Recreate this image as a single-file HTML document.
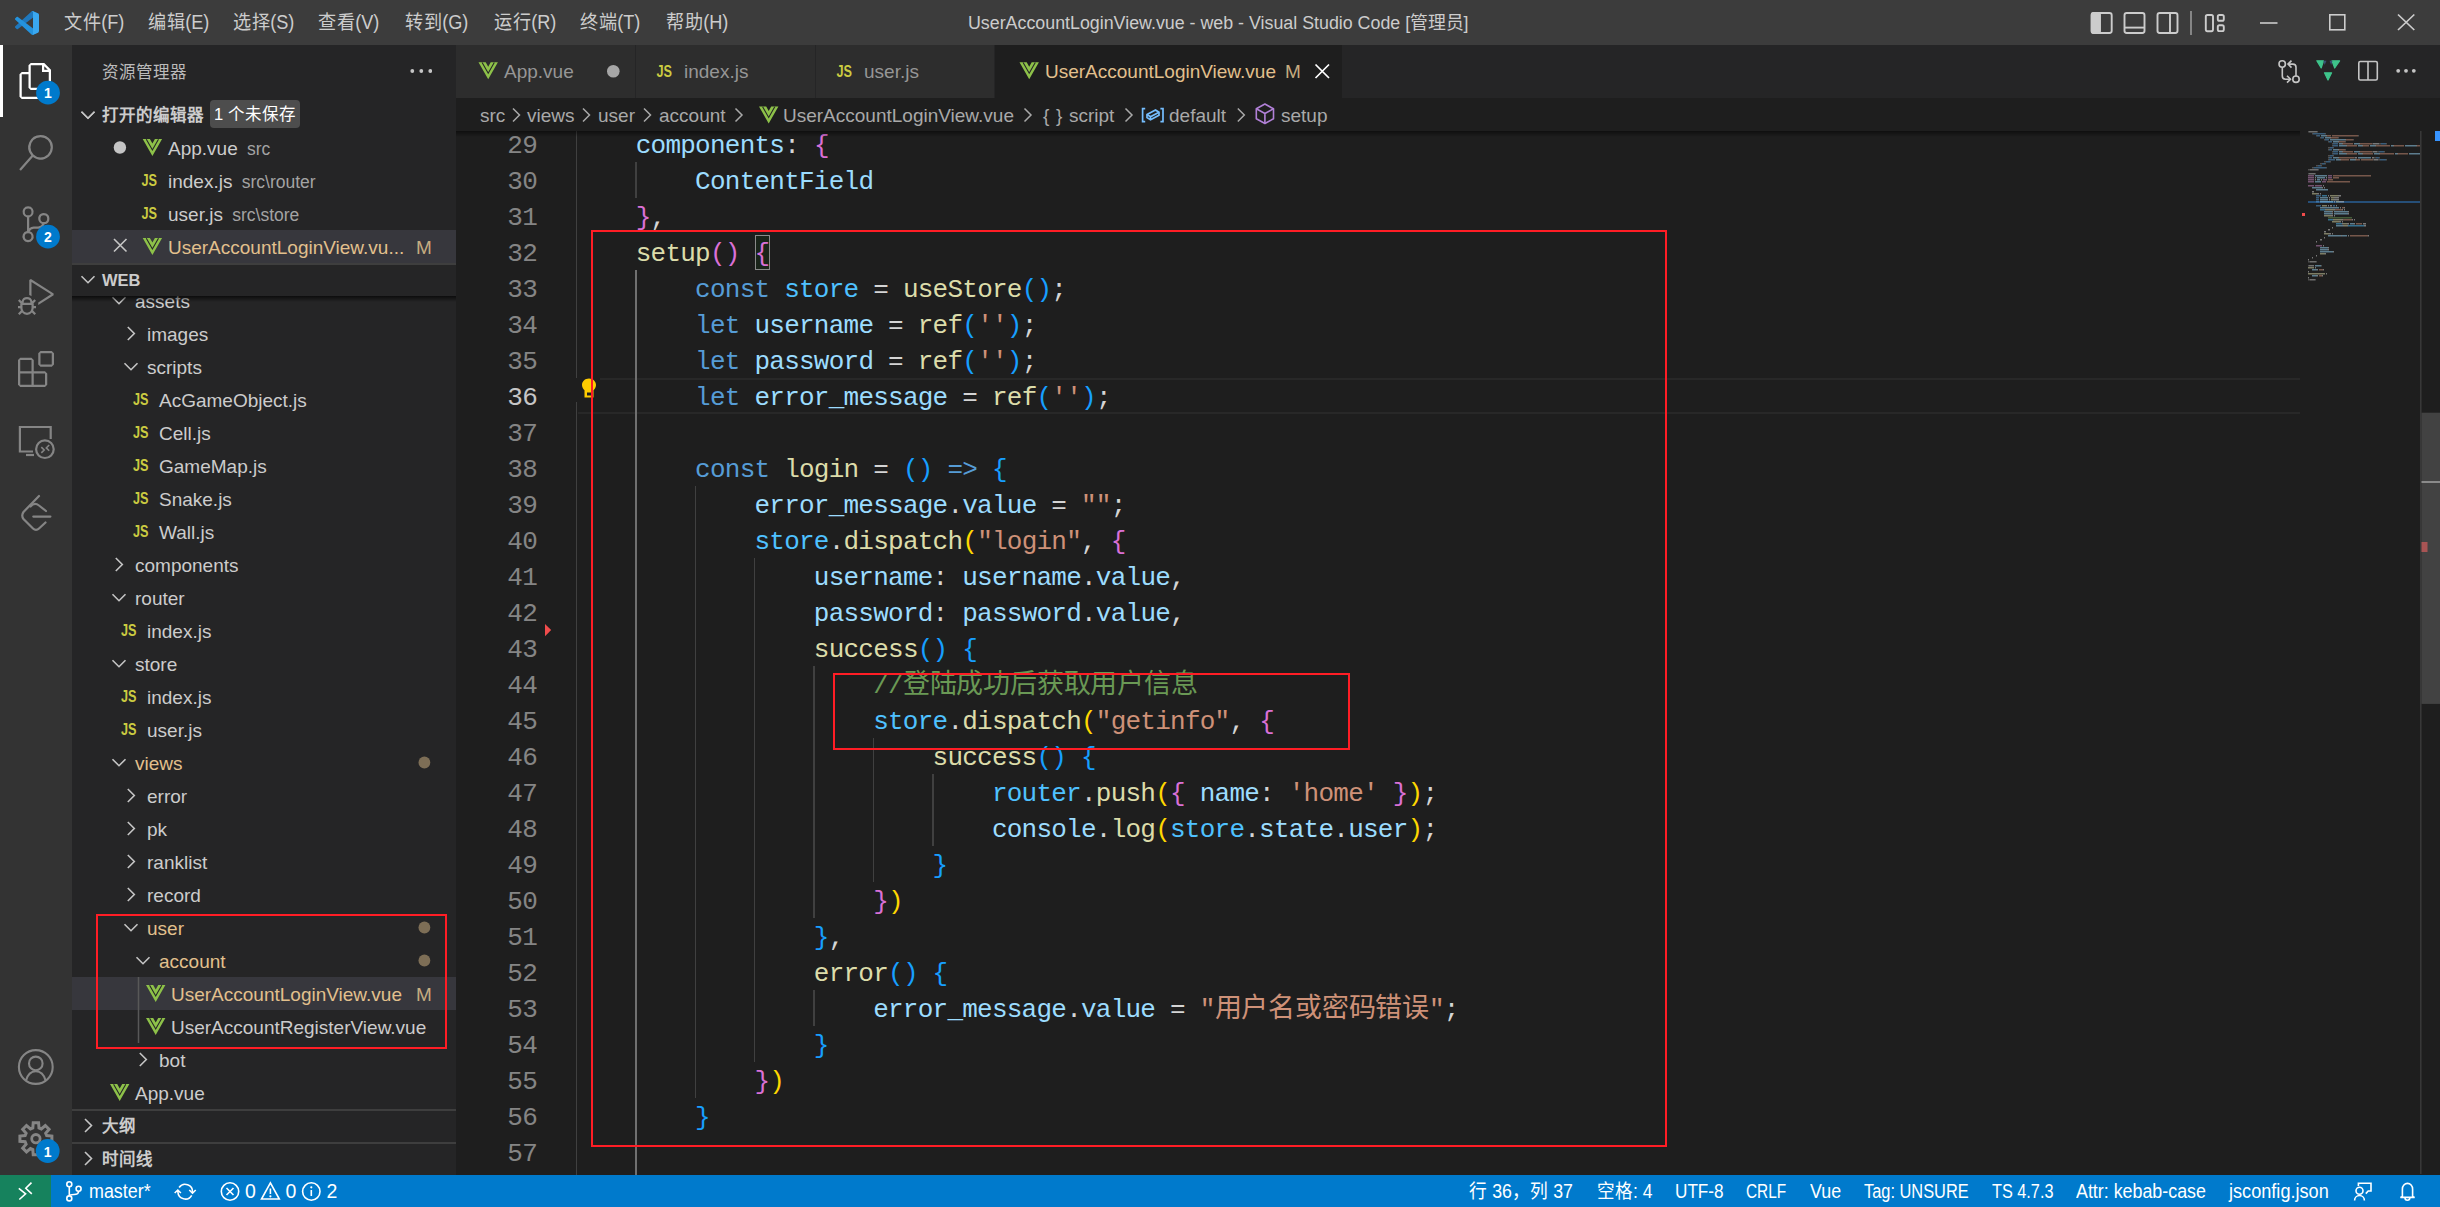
<!DOCTYPE html>
<html lang="zh-CN">
<head>
<meta charset="utf-8">
<style>
*{margin:0;padding:0;box-sizing:border-box}
html,body{width:2440px;height:1207px;overflow:hidden;background:#1e1e1e;font-family:"Liberation Sans",sans-serif;color:#cccccc}
.a{position:absolute}
#title{left:0;top:0;width:2440px;height:45px;background:#3c3c3c}
.menu{top:0;height:45px;line-height:45px;font-size:19.5px;color:#cccccc;white-space:nowrap;transform:scaleX(0.93);transform-origin:0 0}
#act{left:0;top:45px;width:72px;height:1130px;background:#333333}
#side{left:72px;top:45px;width:384px;height:1130px;background:#252526;overflow:hidden}
#tabs{left:456px;top:45px;width:1984px;height:53px;background:#252526}
.tab{top:0;height:53px;background:#2d2d2d;border-right:1px solid #252526}
#crumbs{left:456px;top:98px;width:1984px;height:33px;background:#1e1e1e}
#editor{left:456px;top:131px;width:1984px;height:1044px;background:#1e1e1e;overflow:hidden}
#status{left:0;top:1175px;width:2440px;height:32px;background:#007acc}
.st{top:0;height:32px;line-height:32px;font-size:19.5px;color:#ffffff;white-space:nowrap}
.row{position:absolute;left:0;width:384px;height:33px;line-height:35px;font-size:19px;color:#cccccc;white-space:nowrap}
.code{position:absolute;left:121px;height:36px;line-height:36px;font-family:"Liberation Mono",monospace;font-size:26px;letter-spacing:-0.76px;white-space:pre;color:#d4d4d4}
.cjk{font-size:27px;letter-spacing:-0.2px}
.ln{position:absolute;left:0;width:81px;text-align:right;height:36px;line-height:36px;font-family:"Liberation Mono",monospace;font-size:26px;letter-spacing:-0.76px;color:#858585}
.crumb{top:0;height:33px;line-height:35px;font-size:19px;color:#a9a9a9;white-space:nowrap}
.box{position:absolute;border:2px solid #ff1d25}
</style>
</head>
<body>
<div id="title" class="a">
<svg class="a" style="left:15px;top:10.8px" width="24" height="24" viewBox="0 0 100 100"><path fill="#1f78bd" d="M96.4614 10.7962L75.8569 0.875542C73.4719 -0.272773 70.6217 0.211611 68.75 2.08333L1.29858 63.5832C-0.515693 65.2373 -0.513607 68.0937 1.30308 69.7452L6.81272 74.754C8.29793 76.1042 10.5347 76.2036 12.1338 74.9905L93.3609 13.3699C96.0859 11.3026 100 13.2462 100 16.6667V16.4275C100 14.0265 98.6246 11.8378 96.4614 10.7962Z"/><path fill="#2493de" d="M96.4614 89.2038L75.8569 99.1245C73.4719 100.273 70.6217 99.7884 68.75 97.9167L1.29858 36.4169C-0.515693 34.7627 -0.513607 31.9063 1.30308 30.2548L6.81272 25.246C8.29793 23.8958 10.5347 23.7964 12.1338 25.0095L93.3609 86.6301C96.0859 88.6974 100 86.7538 100 83.3334V83.5726C100 85.9735 98.6246 88.1622 96.4614 89.2038Z"/><path fill="#3aa8f0" d="M75.8578 99.1263C73.4721 100.274 70.6219 99.7885 68.75 97.9166C71.0564 100.223 75 98.5895 75 95.3278V4.67213C75 1.41039 71.0564 -0.223106 68.75 2.08329C70.6219 0.211402 73.4721 -0.273666 75.8578 0.873633L96.4587 10.7807C98.6234 11.8217 100 14.0112 100 16.4132V83.5871C100 85.9891 98.6234 88.1786 96.4586 89.2196L75.8578 99.1263Z"/></svg>
<div class="a menu" style="left:64px">文件(F)</div>
<div class="a menu" style="left:148px">编辑(E)</div>
<div class="a menu" style="left:233px">选择(S)</div>
<div class="a menu" style="left:318px">查看(V)</div>
<div class="a menu" style="left:405px">转到(G)</div>
<div class="a menu" style="left:494px">运行(R)</div>
<div class="a menu" style="left:580px">终端(T)</div>
<div class="a menu" style="left:666px">帮助(H)</div>
<div class="a menu" id="wtitle" style="left:968px;top:1px;font-size:18px;transform:scaleX(0.99)">UserAccountLoginView.vue - web - Visual Studio Code [管理员]</div>
<svg class="a" style="left:2080px;top:0" width="360" height="45" viewBox="2080 0 360 45" fill="none" stroke="#cccccc" stroke-width="1.9">
<rect x="2091.7" y="13" width="20" height="20" rx="2.2"/><rect x="2091.7" y="13" width="8.3" height="20" rx="1.8" fill="#cccccc"/>
<rect x="2124.5" y="13" width="20" height="20" rx="2.2"/><line x1="2124.5" y1="27.6" x2="2144.5" y2="27.6"/>
<rect x="2157.5" y="13" width="20" height="20" rx="2.2"/><line x1="2170" y1="13" x2="2170" y2="33"/>
<line x1="2191" y1="11" x2="2191" y2="35" stroke="#999999" stroke-width="1.6"/>
<rect x="2205.8" y="15" width="7.2" height="16.2" rx="1.6"/><rect x="2217.8" y="15" width="6" height="5.8" rx="1.6"/><rect x="2217.8" y="25.3" width="6" height="5.8" rx="1.6"/>
<line x1="2260" y1="23" x2="2277.5" y2="23" stroke-width="1.6"/>
<rect x="2329.8" y="14.8" width="15" height="15" stroke-width="1.6"/>
<path d="M2398 14.5L2414.3 30M2414.3 14.5L2398 30" stroke-width="1.7"/>
</svg>
</div>
<div id="act" class="a">
<svg class="a" style="left:0;top:0" width="72" height="1129" viewBox="0 45 72 1129">
<rect x="0" y="45" width="3" height="72" fill="#ffffff"/>
<g transform="translate(18 63) scale(1.5)" fill="#ffffff"><path d="M17.5 0h-9L7 1.5V6H2.5L1 7.5v15.07L2.5 24h12.07L16 22.57V18h4.7l1.3-1.43V4.5L17.5 0zm0 2.12l2.38 2.38H17.5V2.12zm-3 20.38h-12v-15H7v9.07L8.5 18h6v4.5zm6-6h-12v-15H16V6h4.5v10.5z"/></g>
<g transform="translate(17.7 134.9) scale(1.5)" fill="#858585"><path d="M15.25 0a8.25 8.25 0 0 0-6.18 13.72L1 22.88l1.12 1 8.05-9.12A8.251 8.251 0 1 0 15.25.01V0zm0 15a6.75 6.75 0 1 1 0-13.5 6.75 6.75 0 0 1 0 13.5z"/></g>
<g transform="translate(17.9 206.3) scale(1.5)" fill="#858585"><path d="M21.007 8.222A3.738 3.738 0 0 0 15.045 5.2a3.737 3.737 0 0 0 1.156 6.583 2.988 2.988 0 0 1-2.668 1.67h-2.99a4.456 4.456 0 0 0-2.989 1.165V7.4a3.737 3.737 0 1 0-1.494 0v9.117a3.776 3.776 0 1 0 1.816.099 2.99 2.99 0 0 1 2.668-1.667h2.99a4.484 4.484 0 0 0 4.223-3.039 3.736 3.736 0 0 0 3.25-3.687zM4.565 3.738a2.242 2.242 0 1 1 4.484 0 2.242 2.242 0 0 1-4.484 0zm4.484 16.441a2.242 2.242 0 1 1-4.484 0 2.242 2.242 0 0 1 4.484 0zm8.221-9.715a2.242 2.242 0 1 1 0-4.485 2.242 2.242 0 0 1 0 4.485z"/></g>
<g transform="translate(18 279) scale(1.5)" fill="#858585"><path d="M10.94 13.5l-1.32 1.32a3.73 3.73 0 0 0-7.24 0L1.06 13.5 0 14.56l1.72 1.72-.22.22V18H0v1.5h1.5v.08c.077.489.214.966.41 1.42L0 22.94 1.06 24l1.65-1.650A4.308 4.308 0 0 0 6 24a4.310 4.310 0 0 0 3.29-1.65L10.94 24 12 22.94 10.09 21c.198-.464.336-.951.41-1.45v-.1H12V18h-1.5v-1.5l-.22-.22L12 14.56l-1.06-1.06zM6 13.5a2.25 2.25 0 0 1 2.25 2.25h-4.5A2.25 2.25 0 0 1 6 13.5zm3 6a3.330 3.330 0 0 1-3 3 3.330 3.330 0 0 1-3-3v-2.25h6v2.25zm14.76-9.9v1.26L13.5 17.37V15.6l8.5-5.37L9 2v9.46a5.070 5.070 0 0 0-1.5-.72V.63L8.64 0l15.12 9.6z"/></g>
<g transform="translate(18 351) scale(1.5)" fill="#858585"><path d="M13.5 1.5L15 0h7.5L24 1.5V9l-1.5 1.5H15L13.5 9V1.5zm1.5 0V9h7.5V1.5H15zM0 15V6l1.5-1.5H9L10.5 6v7.5H18l1.5 1.5v7.5L18 24H1.5L0 22.5V15zm9-1.5V6H1.5v7.5H9zM9 15H1.5v7.5H9V15zm1.5 7.5H18V15h-7.5v7.5z"/></g>
<g fill="none" stroke="#858585" stroke-width="2.2">
<path d="M33 451.5H19.9V427H50.7V439"/><path d="M26 455H34"/>
<circle cx="44.9" cy="449.2" r="8.8"/>
<path d="M41.3 447.2L44.2 450L41.3 452.8M49.2 445L46.3 447.9L49.2 450.8" stroke-width="1.6"/>
<path d="M39 496L23.5 512Q21 515.5 23.5 519L33 528.5Q36 531.5 39 528.5L45.5 522.5" stroke-linecap="round"/>
<path d="M30.5 506.5Q34.5 502 39 505.5L46 511" stroke-linecap="round"/>
<path d="M33.3 516.6H50.4" stroke-linecap="round"/>
<circle cx="35.8" cy="1067" r="16.9" stroke-width="2.1"/>
<circle cx="35.8" cy="1063.4" r="6.8" stroke-width="2.1"/>
<path d="M26 1080.5Q28.5 1071.2 35.8 1071.2Q43.1 1071.2 45.6 1080.5" stroke-width="2.1"/>
</g>
<g transform="translate(35.9 1138.7)" fill="none" stroke="#858585" stroke-width="3" stroke-linejoin="miter">
<path d="M-3.09 -10.77L-2.67 -15.98L2.67 -15.98L3.09 -10.77L5.43 -9.80L9.41 -13.19L13.19 -9.41L9.80 -5.43L10.77 -3.09L15.98 -2.67L15.98 2.67L10.77 3.09L9.80 5.43L13.19 9.41L9.41 13.19L5.43 9.80L3.09 10.77L2.67 15.98L-2.67 15.98L-3.09 10.77L-5.43 9.80L-9.41 13.19L-13.19 9.41L-9.80 5.43L-10.77 3.09L-15.98 2.67L-15.98 -2.67L-10.77 -3.09L-9.80 -5.43L-13.19 -9.41L-9.41 -13.19L-5.43 -9.80Z"/>
<circle cx="0" cy="0" r="4.2" stroke-width="2.8"/>
</g>
<g font-family="Liberation Sans" font-weight="bold" font-size="14" fill="#fff" text-anchor="middle">
<circle cx="48" cy="92.7" r="11.9" fill="#007acc"/><text x="48" y="98.3">1</text>
<circle cx="48" cy="236.7" r="11.9" fill="#007acc"/><text x="48" y="242.3">2</text>
<circle cx="47.7" cy="1151" r="11.9" fill="#007acc"/><text x="47.7" y="1156.6">1</text>
</g>
</svg>
</div>
<div id="side" class="a">
<svg width="0" height="0" style="position:absolute"><defs>
<g id="vue"><path fill="#8dc149" d="M0 0H7.2L9.7 4.4L12.2 0H19.4L9.7 17Z"/><path fill="none" stroke="#252526" stroke-width="1.1" d="M3.6 0.3L9.7 10.9L15.8 0.3"/></g>
</defs></svg>
<div class="a" style="left:30px;top:14px;font-size:16.5px;line-height:26px;color:#bbbbbb">资源管理器</div>
<svg class="a" style="left:330px;top:19px" width="30" height="14"><g fill="#c5c5c5"><circle cx="10.3" cy="7" r="1.9"/><circle cx="19.3" cy="7" r="1.9"/><circle cx="28.3" cy="7" r="1.9"/></g></svg>
<svg class="a" style="left:0;top:53px" width="384" height="198">
<g fill="none" stroke="#c5c5c5" stroke-width="1.6">
<path d="M9.5 13.7L16 20.2L22.5 13.7"/>
<path d="M9.5 211.7L16 218.2L22.5 211.7" transform="translate(0 -198)"/>
</g>
</svg>
<div class="a" style="left:30px;top:53px;height:33px;line-height:35px;font-size:16.5px;font-weight:bold;color:#cccccc">打开的编辑器</div>
<div class="a" style="left:138px;top:55px;width:90px;height:28px;border-radius:4px;background:#4d4d4d;color:#ffffff;font-size:16.5px;line-height:28px;text-align:center">1 个未保存</div>
<div class="a" style="left:0;top:185px;width:384px;height:33px;background:#37373d"></div>
<svg class="a" style="left:0;top:86px" width="384" height="132">
<circle cx="47.9" cy="16.5" r="6.2" fill="#c5c5c5"/>
<path d="M42 108L54.5 120.5M54.5 108L42 120.5" stroke="#c5c5c5" stroke-width="1.6" fill="none"/>
<use href="#vue" x="70.7" y="8"/>
<use href="#vue" x="70.7" y="107"/>
<g font-family="Liberation Sans" font-weight="bold" font-size="16" fill="#cbcb41"><text x="69.5" y="55.3" textLength="15.5" lengthAdjust="spacingAndGlyphs">JS</text><text x="69.5" y="88.3" textLength="15.5" lengthAdjust="spacingAndGlyphs">JS</text></g>
</svg>
<div class="row" style="top:86px;left:96px">App.vue <span style="font-size:17.5px;color:#a3a3a3;margin-left:4px">src</span></div>
<div class="row" style="top:119px;left:96px">index.js <span style="font-size:17.5px;color:#a3a3a3;margin-left:4px">src\router</span></div>
<div class="row" style="top:152px;left:96px">user.js <span style="font-size:17.5px;color:#a3a3a3;margin-left:4px">src\store</span></div>
<div class="row" style="top:185px;left:96px;color:#e2c08d">UserAccountLoginView.vu...</div>
<div class="row" style="top:185px;left:344px;color:#c5ab80;width:20px">M</div>
<div class="a" style="left:0;top:218px;width:384px;height:33px;border-top:2px solid #3e3e3e"></div>
<svg class="a" style="left:0;top:218px" width="384" height="33"><path d="M9.5 13.2L16 19.7L22.5 13.2" fill="none" stroke="#c5c5c5" stroke-width="1.6"/></svg>
<div class="a" style="left:30px;top:218px;height:33px;line-height:35px;font-size:16.5px;font-weight:bold;color:#cccccc">WEB</div>
<div class="a" style="left:0;top:251px;width:384px;height:813px;overflow:hidden">
<div class="a" style="left:0;top:681px;width:384px;height:33px;background:#37373d"></div>
<svg class="a" style="left:0;top:0" width="384" height="813">
<line x1="66.5" y1="681" x2="66.5" y2="747" stroke="#585858" stroke-width="1.5"/>
<g fill="none" stroke="#c5c5c5" stroke-width="1.6">
<path d="M40.5 1.2L47.0 7.7L53.5 1.2"/>
<path d="M55.8 31.0L62.3 37.5L55.8 44.0"/>
<path d="M52.5 67.2L59.0 73.7L65.5 67.2"/>
<path d="M43.8 262.0L50.3 268.5L43.8 275.0"/>
<path d="M40.5 298.2L47.0 304.7L53.5 298.2"/>
<path d="M40.5 364.2L47.0 370.7L53.5 364.2"/>
<path d="M40.5 463.2L47.0 469.7L53.5 463.2"/>
<path d="M55.8 493.0L62.3 499.5L55.8 506.0"/>
<path d="M55.8 526.0L62.3 532.5L55.8 539.0"/>
<path d="M55.8 559.0L62.3 565.5L55.8 572.0"/>
<path d="M55.8 592.0L62.3 598.5L55.8 605.0"/>
<path d="M52.5 628.2L59.0 634.7L65.5 628.2"/>
<path d="M64.5 661.2L71.0 667.7L77.5 661.2"/>
<path d="M67.8 757.0L74.3 763.5L67.8 770.0"/>
</g>
<g font-family="Liberation Sans" font-weight="bold" font-size="16" fill="#cbcb41">
<text x="61" y="109.3" textLength="15.5" lengthAdjust="spacingAndGlyphs">JS</text>
<text x="61" y="142.3" textLength="15.5" lengthAdjust="spacingAndGlyphs">JS</text>
<text x="61" y="175.3" textLength="15.5" lengthAdjust="spacingAndGlyphs">JS</text>
<text x="61" y="208.3" textLength="15.5" lengthAdjust="spacingAndGlyphs">JS</text>
<text x="61" y="241.3" textLength="15.5" lengthAdjust="spacingAndGlyphs">JS</text>
<text x="49" y="340.3" textLength="15.5" lengthAdjust="spacingAndGlyphs">JS</text>
<text x="49" y="406.3" textLength="15.5" lengthAdjust="spacingAndGlyphs">JS</text>
<text x="49" y="439.3" textLength="15.5" lengthAdjust="spacingAndGlyphs">JS</text>
<use href="#vue" x="74" y="689.0"/>
<use href="#vue" x="74" y="722.0"/>
<use href="#vue" x="38" y="788.0"/>
</g>
<g fill="#7d6e56">
<circle cx="352.4" cy="466.5" r="5.9"/>
<circle cx="352.4" cy="631.5" r="5.9"/>
<circle cx="352.4" cy="664.5" r="5.9"/>
</g>
</svg>
<div class="row" style="top:-12px;left:63px;color:#cccccc">assets</div>
<div class="row" style="top:21px;left:75px;color:#cccccc">images</div>
<div class="row" style="top:54px;left:75px;color:#cccccc">scripts</div>
<div class="row" style="top:87px;left:87px;color:#cccccc">AcGameObject.js</div>
<div class="row" style="top:120px;left:87px;color:#cccccc">Cell.js</div>
<div class="row" style="top:153px;left:87px;color:#cccccc">GameMap.js</div>
<div class="row" style="top:186px;left:87px;color:#cccccc">Snake.js</div>
<div class="row" style="top:219px;left:87px;color:#cccccc">Wall.js</div>
<div class="row" style="top:252px;left:63px;color:#cccccc">components</div>
<div class="row" style="top:285px;left:63px;color:#cccccc">router</div>
<div class="row" style="top:318px;left:75px;color:#cccccc">index.js</div>
<div class="row" style="top:351px;left:63px;color:#cccccc">store</div>
<div class="row" style="top:384px;left:75px;color:#cccccc">index.js</div>
<div class="row" style="top:417px;left:75px;color:#cccccc">user.js</div>
<div class="row" style="top:450px;left:63px;color:#e2c08d">views</div>
<div class="row" style="top:483px;left:75px;color:#cccccc">error</div>
<div class="row" style="top:516px;left:75px;color:#cccccc">pk</div>
<div class="row" style="top:549px;left:75px;color:#cccccc">ranklist</div>
<div class="row" style="top:582px;left:75px;color:#cccccc">record</div>
<div class="row" style="top:615px;left:75px;color:#e2c08d">user</div>
<div class="row" style="top:648px;left:87px;color:#e2c08d">account</div>
<div class="row" style="top:681px;left:99px;color:#e2c08d">UserAccountLoginView.vue</div>
<div class="row" style="top:714px;left:99px;color:#cccccc">UserAccountRegisterView.vue</div>
<div class="row" style="top:747px;left:87px;color:#cccccc">bot</div>
<div class="row" style="top:780px;left:63px;color:#cccccc">App.vue</div>
<div class="row" style="top:681px;left:344px;color:#c5ab80;width:20px">M</div>
</div>
<div class="a" style="left:0;top:251px;width:384px;height:6px;background:linear-gradient(#000000aa,#00000000)"></div>
<div class="a" style="left:0;top:1064px;width:384px;height:33px;border-top:2px solid #3e3e3e"></div>
<svg class="a" style="left:0;top:1064px" width="384" height="66"><g fill="none" stroke="#c5c5c5" stroke-width="1.6"><path d="M13 10L19.5 16.5L13 23"/><path d="M13 43L19.5 49.5L13 56"/></g></svg>
<div class="a" style="left:30px;top:1064px;height:33px;line-height:35px;font-size:16.5px;font-weight:bold;color:#cccccc">大纲</div>
<div class="a" style="left:0;top:1097px;width:384px;height:33px;border-top:2px solid #3e3e3e"></div>
<div class="a" style="left:30px;top:1097px;height:33px;line-height:35px;font-size:16.5px;font-weight:bold;color:#cccccc">时间线</div>
</div>
<div id="tabs" class="a">
<div class="a tab" style="left:0;width:180px"></div>
<div class="a tab" style="left:180px;width:180px"></div>
<div class="a tab" style="left:360px;width:179px"></div>
<div class="a" style="left:539px;top:0;width:347px;height:53px;background:#1e1e1e"></div>
<svg class="a" style="left:0;top:0" width="1984" height="53">
<use href="#vue" x="22.5" y="17.3"/>
<use href="#vue" x="563.5" y="17.3"/>
<g font-family="Liberation Sans" font-weight="bold" font-size="16" fill="#cbcb41"><text x="200.5" y="31.5" textLength="15.5" lengthAdjust="spacingAndGlyphs">JS</text><text x="380.5" y="31.5" textLength="15.5" lengthAdjust="spacingAndGlyphs">JS</text></g>
<circle cx="157.3" cy="26.2" r="6.3" fill="#a6a6a6"/>
<path d="M859.5 19.5L873 33M873 19.5L859.5 33" stroke="#ffffff" stroke-width="1.7" fill="none"/>
</svg>
<div class="a" style="left:48px;top:0;height:53px;line-height:54.5px;font-size:19px;color:#969696">App.vue</div>
<div class="a" style="left:228px;top:0;height:53px;line-height:54.5px;font-size:19px;color:#969696">index.js</div>
<div class="a" style="left:408px;top:0;height:53px;line-height:54.5px;font-size:19px;color:#969696">user.js</div>
<div class="a" style="left:589px;top:0;height:53px;line-height:54.5px;font-size:19px;color:#e2c08d">UserAccountLoginView.vue</div>
<div class="a" style="left:829px;top:0;height:53px;line-height:54.5px;font-size:19px;color:#c5ab80">M</div>
<svg class="a" style="left:1810px;top:0" width="174" height="53" viewBox="2266 45 174 53">
<g fill="none" stroke="#c5c5c5" stroke-width="1.6">
<circle cx="2282.2" cy="64" r="3.2"/><circle cx="2296" cy="79.2" r="3.2"/><path d="M2282.3 67.2V76Q2282.3 79.2 2285.5 79.2H2290.3"/><path d="M2287 75.8L2290.5 79.2L2287 82.6"/><path d="M2296 76V67.3Q2296 64.1 2292.8 64.1H2288.2"/><path d="M2291.5 60.6L2288 64.1L2291.5 67.6"/><rect x="2358.8" y="61.5" width="18.5" height="18.5" rx="1.5"/><path d="M2368 61.5V80"/>
</g>
<g fill="#3ec48b" stroke="#3ec48b" stroke-width="1.2" stroke-linejoin="round"><path d="M2316.8 60.8L2323.5 60.8L2321.2 68Z"/><path d="M2332 60.8L2339.6 60.8L2334.7 68Z"/><path d="M2324.5 72.8L2331.6 72.8L2328 80Z"/></g><g fill="#3a4f72"><path d="M2323.3 60.8L2326.5 60.8L2324.6 65Z"/><path d="M2329.5 60.8L2332.5 60.8L2331.2 65Z"/></g>
<g fill="#c5c5c5"><circle cx="2398.2" cy="70.8" r="1.9"/><circle cx="2406" cy="70.8" r="1.9"/><circle cx="2413.8" cy="70.8" r="1.9"/></g>
</svg>
</div>
<div id="crumbs" class="a">
<svg class="a" style="left:0;top:0" width="1984" height="33" viewBox="456 98 1984 33">
<g fill="none" stroke="#a9a9a9" stroke-width="1.5">
<path d="M513 108.5L519.5 115L513 121.5"/><path d="M583 108.5L589.5 115L583 121.5"/><path d="M644 108.5L650.5 115L644 121.5"/>
<path d="M735.5 108.5L742 115L735.5 121.5"/><path d="M1024.5 108.5L1031 115L1024.5 121.5"/><path d="M1125.5 108.5L1132 115L1125.5 121.5"/><path d="M1237.8 108.5L1244.3 115L1237.8 121.5"/>
</g>
<use href="#vue" x="759" y="106.5"/>
<g fill="none" stroke="#75beff" stroke-width="1.7"><path d="M1145.2 108.6H1142.6V121.6H1145.2M1160.4 108.6H1163V121.6H1160.4"/><path d="M1147 114.5L1155.5 110L1159 112.3V115.2L1150.5 119.7L1147 117.5Z"/><path d="M1147 114.5L1150.5 116.7L1159 112.3M1150.5 116.7V119.7"/></g>
<g fill="none" stroke="#b180d7" stroke-width="1.6" stroke-linejoin="round"><path d="M1264.9 104L1273.5 108.8V118.8L1264.9 123.5L1256.3 118.8V108.8Z"/><path d="M1256.3 108.8L1264.9 113.5L1273.5 108.8M1264.9 113.5V123.5"/></g>
</svg>
<div class="a crumb" style="left:24px">src</div>
<div class="a crumb" style="left:71px">views</div>
<div class="a crumb" style="left:142px">user</div>
<div class="a crumb" style="left:203px">account</div>
<div class="a crumb" style="left:327px">UserAccountLoginView.vue</div>
<div class="a crumb" style="left:587px">{</div><div class="a crumb" style="left:600px">}</div><div class="a crumb" style="left:613px">script</div>
<div class="a crumb" style="left:713px">default</div>
<div class="a crumb" style="left:825px">setup</div>
</div>
<div id="editor" class="a">
<div class="a" style="left:144px;top:247px;width:1700px;height:2.2px;background:#282828"></div>
<div class="a" style="left:122px;top:280.5px;width:1722px;height:2.5px;background:#282828"></div>
<div class="a" style="left:119.80px;top:-5px;width:1.6px;height:1080px;background:#404040"></div>
<div class="a" style="left:179.16px;top:31px;width:1.6px;height:36px;background:#404040"></div>
<div class="a" style="left:179.16px;top:139px;width:1.6px;height:936px;background:#707070"></div>
<div class="a" style="left:238.52px;top:355px;width:1.6px;height:612px;background:#404040"></div>
<div class="a" style="left:297.88px;top:427px;width:1.6px;height:504px;background:#404040"></div>
<div class="a" style="left:357.24px;top:535px;width:1.6px;height:252px;background:#404040"></div>
<div class="a" style="left:357.24px;top:859px;width:1.6px;height:36px;background:#404040"></div>
<div class="a" style="left:416.60px;top:607px;width:1.6px;height:144px;background:#404040"></div>
<div class="a" style="left:475.96px;top:643px;width:1.6px;height:72px;background:#404040"></div>
<div class="a" style="left:119px;top:247px;width:4px;height:24px;background:#1e1e1e"></div>
<div class="a" style="left:298.58px;top:103.5px;width:15.5px;height:35px;border:1.5px solid #8a8a8a;background:rgba(0,100,0,0.1)"></div>
<div class="ln" style="top:-3px;color:#858585">29</div>
<div class="ln" style="top:33px;color:#858585">30</div>
<div class="ln" style="top:69px;color:#858585">31</div>
<div class="ln" style="top:105px;color:#858585">32</div>
<div class="ln" style="top:141px;color:#858585">33</div>
<div class="ln" style="top:177px;color:#858585">34</div>
<div class="ln" style="top:213px;color:#858585">35</div>
<div class="ln" style="top:249px;color:#c6c6c6">36</div>
<div class="ln" style="top:285px;color:#858585">37</div>
<div class="ln" style="top:321px;color:#858585">38</div>
<div class="ln" style="top:357px;color:#858585">39</div>
<div class="ln" style="top:393px;color:#858585">40</div>
<div class="ln" style="top:429px;color:#858585">41</div>
<div class="ln" style="top:465px;color:#858585">42</div>
<div class="ln" style="top:501px;color:#858585">43</div>
<div class="ln" style="top:537px;color:#858585">44</div>
<div class="ln" style="top:573px;color:#858585">45</div>
<div class="ln" style="top:609px;color:#858585">46</div>
<div class="ln" style="top:645px;color:#858585">47</div>
<div class="ln" style="top:681px;color:#858585">48</div>
<div class="ln" style="top:717px;color:#858585">49</div>
<div class="ln" style="top:753px;color:#858585">50</div>
<div class="ln" style="top:789px;color:#858585">51</div>
<div class="ln" style="top:825px;color:#858585">52</div>
<div class="ln" style="top:861px;color:#858585">53</div>
<div class="ln" style="top:897px;color:#858585">54</div>
<div class="ln" style="top:933px;color:#858585">55</div>
<div class="ln" style="top:969px;color:#858585">56</div>
<div class="ln" style="top:1005px;color:#858585">57</div>
<div class="ln" style="top:1041px;color:#858585">58</div>
<div class="code" style="top:-3px;left:179.76px"><span style="color:#9cdcfe">components</span><span style="color:#d4d4d4">:</span> <span style="color:#da70d6">{</span></div>
<div class="code" style="top:33px;left:239.12px"><span style="color:#9cdcfe">ContentField</span></div>
<div class="code" style="top:69px;left:179.76px"><span style="color:#da70d6">}</span><span style="color:#d4d4d4">,</span></div>
<div class="code" style="top:105px;left:179.76px"><span style="color:#dcdcaa">setup</span><span style="color:#da70d6">()</span> <span style="color:#da70d6">{</span></div>
<div class="code" style="top:141px;left:239.12px"><span style="color:#569cd6">const</span> <span style="color:#4fc1ff">store</span><span style="color:#d4d4d4"> = </span><span style="color:#dcdcaa">useStore</span><span style="color:#179fff">()</span><span style="color:#d4d4d4">;</span></div>
<div class="code" style="top:177px;left:239.12px"><span style="color:#569cd6">let</span> <span style="color:#9cdcfe">username</span><span style="color:#d4d4d4"> = </span><span style="color:#dcdcaa">ref</span><span style="color:#179fff">(</span><span style="color:#ce9178">&#x27;&#x27;</span><span style="color:#179fff">)</span><span style="color:#d4d4d4">;</span></div>
<div class="code" style="top:213px;left:239.12px"><span style="color:#569cd6">let</span> <span style="color:#9cdcfe">password</span><span style="color:#d4d4d4"> = </span><span style="color:#dcdcaa">ref</span><span style="color:#179fff">(</span><span style="color:#ce9178">&#x27;&#x27;</span><span style="color:#179fff">)</span><span style="color:#d4d4d4">;</span></div>
<div class="code" style="top:249px;left:239.12px"><span style="color:#569cd6">let</span> <span style="color:#9cdcfe">error_message</span><span style="color:#d4d4d4"> = </span><span style="color:#dcdcaa">ref</span><span style="color:#179fff">(</span><span style="color:#ce9178">&#x27;&#x27;</span><span style="color:#179fff">)</span><span style="color:#d4d4d4">;</span></div>
<div class="code" style="top:321px;left:239.12px"><span style="color:#569cd6">const</span> <span style="color:#dcdcaa">login</span><span style="color:#d4d4d4"> = </span><span style="color:#179fff">()</span> <span style="color:#569cd6">=&gt;</span> <span style="color:#179fff">{</span></div>
<div class="code" style="top:357px;left:298.48px"><span style="color:#9cdcfe">error_message</span><span style="color:#d4d4d4">.</span><span style="color:#9cdcfe">value</span><span style="color:#d4d4d4"> = </span><span style="color:#ce9178">&quot;&quot;</span><span style="color:#d4d4d4">;</span></div>
<div class="code" style="top:393px;left:298.48px"><span style="color:#4fc1ff">store</span><span style="color:#d4d4d4">.</span><span style="color:#dcdcaa">dispatch</span><span style="color:#ffd700">(</span><span style="color:#ce9178">&quot;login&quot;</span><span style="color:#d4d4d4">, </span><span style="color:#da70d6">{</span></div>
<div class="code" style="top:429px;left:357.84px"><span style="color:#9cdcfe">username</span><span style="color:#d4d4d4">: </span><span style="color:#9cdcfe">username</span><span style="color:#d4d4d4">.</span><span style="color:#9cdcfe">value</span><span style="color:#d4d4d4">,</span></div>
<div class="code" style="top:465px;left:357.84px"><span style="color:#9cdcfe">password</span><span style="color:#d4d4d4">: </span><span style="color:#9cdcfe">password</span><span style="color:#d4d4d4">.</span><span style="color:#9cdcfe">value</span><span style="color:#d4d4d4">,</span></div>
<div class="code" style="top:501px;left:357.84px"><span style="color:#dcdcaa">success</span><span style="color:#179fff">()</span> <span style="color:#179fff">{</span></div>
<div class="code" style="top:537px;left:417.20px"><span style="color:#6a9955">//<span class="cjk">登陆成功后获取用户信息</span></span></div>
<div class="code" style="top:573px;left:417.20px"><span style="color:#4fc1ff">store</span><span style="color:#d4d4d4">.</span><span style="color:#dcdcaa">dispatch</span><span style="color:#ffd700">(</span><span style="color:#ce9178">&quot;getinfo&quot;</span><span style="color:#d4d4d4">, </span><span style="color:#da70d6">{</span></div>
<div class="code" style="top:609px;left:476.56px"><span style="color:#dcdcaa">success</span><span style="color:#179fff">()</span> <span style="color:#179fff">{</span></div>
<div class="code" style="top:645px;left:535.92px"><span style="color:#4fc1ff">router</span><span style="color:#d4d4d4">.</span><span style="color:#dcdcaa">push</span><span style="color:#ffd700">(</span><span style="color:#da70d6">{</span> <span style="color:#9cdcfe">name</span><span style="color:#d4d4d4">: </span><span style="color:#ce9178">&#x27;home&#x27;</span> <span style="color:#da70d6">}</span><span style="color:#ffd700">)</span><span style="color:#d4d4d4">;</span></div>
<div class="code" style="top:681px;left:535.92px"><span style="color:#9cdcfe">console</span><span style="color:#d4d4d4">.</span><span style="color:#dcdcaa">log</span><span style="color:#ffd700">(</span><span style="color:#4fc1ff">store</span><span style="color:#d4d4d4">.</span><span style="color:#9cdcfe">state</span><span style="color:#d4d4d4">.</span><span style="color:#9cdcfe">user</span><span style="color:#ffd700">)</span><span style="color:#d4d4d4">;</span></div>
<div class="code" style="top:717px;left:476.56px"><span style="color:#179fff">}</span></div>
<div class="code" style="top:753px;left:417.20px"><span style="color:#da70d6">}</span><span style="color:#ffd700">)</span></div>
<div class="code" style="top:789px;left:357.84px"><span style="color:#179fff">}</span><span style="color:#d4d4d4">,</span></div>
<div class="code" style="top:825px;left:357.84px"><span style="color:#dcdcaa">error</span><span style="color:#179fff">()</span> <span style="color:#179fff">{</span></div>
<div class="code" style="top:861px;left:417.20px"><span style="color:#9cdcfe">error_message</span><span style="color:#d4d4d4">.</span><span style="color:#9cdcfe">value</span><span style="color:#d4d4d4"> = </span><span style="color:#ce9178">&quot;<span class="cjk">用户名或密码错误</span>&quot;</span><span style="color:#d4d4d4">;</span></div>
<div class="code" style="top:897px;left:357.84px"><span style="color:#179fff">}</span></div>
<div class="code" style="top:933px;left:298.48px"><span style="color:#da70d6">}</span><span style="color:#ffd700">)</span></div>
<div class="code" style="top:969px;left:239.12px"><span style="color:#179fff">}</span></div>
<svg class="a" style="left:125px;top:247px" width="16" height="22" viewBox="0 0 16 22"><path fill="#ffcc00" d="M8 0.5C3.9 0.5 1 3.4 1 7.1c0 2.3 1.2 3.9 2.5 5.2V19.5h9V12.3c1.3-1.3 2.5-2.9 2.5-5.2C15 3.4 12.1 0.5 8 0.5z"/><rect x="6" y="14.5" width="4" height="3" fill="#1e1e1e"/></svg>
<svg class="a" style="left:88.9px;top:492.7px" width="10" height="13"><path d="M0 0L6.2 6.1L0 12.2Z" fill="#f14c4c"/></svg>
<svg class="a" style="left:1844px;top:0" width="140" height="1043" viewBox="2300 131 140 1043">
<rect x="2308" y="201" width="112" height="2" fill="#264f78"/>
<g opacity="0.5"><rect x="2308.0" y="131" width="1.0" height="1.5" fill="#808080"/><rect x="2309.0" y="131" width="8.0" height="1.5" fill="#c0c0c0"/><rect x="2317.0" y="131" width="1.0" height="1.5" fill="#808080"/><rect x="2312.0" y="133" width="1.0" height="1.5" fill="#808080"/><rect x="2313.0" y="133" width="12.0" height="1.5" fill="#569cd6"/><rect x="2325.0" y="133" width="1.0" height="1.5" fill="#808080"/><rect x="2316.0" y="135" width="1.0" height="1.5" fill="#808080"/><rect x="2317.0" y="135" width="3.0" height="1.5" fill="#569cd6"/><rect x="2321.0" y="135" width="5.0" height="1.5" fill="#9cdcfe"/><rect x="2326.0" y="135" width="1.0" height="1.5" fill="#d4d4d4"/><rect x="2327.0" y="135" width="4.0" height="1.5" fill="#ce9178"/><rect x="2332.0" y="135" width="26.0" height="1.5" fill="#ce9178"/><rect x="2358.0" y="135" width="1.0" height="1.5" fill="#808080"/><rect x="2320.0" y="137" width="1.0" height="1.5" fill="#808080"/><rect x="2321.0" y="137" width="3.0" height="1.5" fill="#569cd6"/><rect x="2325.0" y="137" width="5.0" height="1.5" fill="#9cdcfe"/><rect x="2330.0" y="137" width="1.0" height="1.5" fill="#d4d4d4"/><rect x="2331.0" y="137" width="7.0" height="1.5" fill="#ce9178"/><rect x="2338.0" y="137" width="1.0" height="1.5" fill="#808080"/><rect x="2324.0" y="139" width="1.0" height="1.5" fill="#808080"/><rect x="2325.0" y="139" width="4.0" height="1.5" fill="#569cd6"/><rect x="2330.0" y="139" width="15.0" height="1.5" fill="#9cdcfe"/><rect x="2345.0" y="139" width="1.0" height="1.5" fill="#d4d4d4"/><rect x="2346.0" y="139" width="7.0" height="1.5" fill="#ce9178"/><rect x="2353.0" y="139" width="1.0" height="1.5" fill="#808080"/><rect x="2328.0" y="141" width="1.0" height="1.5" fill="#808080"/><rect x="2329.0" y="141" width="3.0" height="1.5" fill="#569cd6"/><rect x="2333.0" y="141" width="5.0" height="1.5" fill="#9cdcfe"/><rect x="2338.0" y="141" width="1.0" height="1.5" fill="#d4d4d4"/><rect x="2339.0" y="141" width="6.0" height="1.5" fill="#ce9178"/><rect x="2345.0" y="141" width="1.0" height="1.5" fill="#808080"/><rect x="2332.0" y="143" width="1.0" height="1.5" fill="#808080"/><rect x="2333.0" y="143" width="5.0" height="1.5" fill="#569cd6"/><rect x="2339.0" y="143" width="3.0" height="1.5" fill="#9cdcfe"/><rect x="2342.0" y="143" width="1.0" height="1.5" fill="#d4d4d4"/><rect x="2343.0" y="143" width="10.0" height="1.5" fill="#ce9178"/><rect x="2354.0" y="143" width="5.0" height="1.5" fill="#9cdcfe"/><rect x="2359.0" y="143" width="1.0" height="1.5" fill="#d4d4d4"/><rect x="2360.0" y="143" width="12.0" height="1.5" fill="#ce9178"/><rect x="2372.0" y="143" width="1.0" height="1.5" fill="#808080"/><rect x="2373.0" y="143" width="6.0" height="1.5" fill="#d4d4d4"/><rect x="2379.0" y="143" width="2.0" height="1.5" fill="#808080"/><rect x="2381.0" y="143" width="5.0" height="1.5" fill="#569cd6"/><rect x="2386.0" y="143" width="1.0" height="1.5" fill="#808080"/><rect x="2332.0" y="145" width="1.0" height="1.5" fill="#808080"/><rect x="2333.0" y="145" width="5.0" height="1.5" fill="#569cd6"/><rect x="2339.0" y="145" width="7.0" height="1.5" fill="#9cdcfe"/><rect x="2346.0" y="145" width="1.0" height="1.5" fill="#d4d4d4"/><rect x="2347.0" y="145" width="10.0" height="1.5" fill="#ce9178"/><rect x="2358.0" y="145" width="4.0" height="1.5" fill="#9cdcfe"/><rect x="2362.0" y="145" width="1.0" height="1.5" fill="#d4d4d4"/><rect x="2363.0" y="145" width="6.0" height="1.5" fill="#ce9178"/><rect x="2370.0" y="145" width="5.0" height="1.5" fill="#9cdcfe"/><rect x="2375.0" y="145" width="1.0" height="1.5" fill="#d4d4d4"/><rect x="2376.0" y="145" width="14.0" height="1.5" fill="#ce9178"/><rect x="2391.0" y="145" width="2.0" height="1.5" fill="#9cdcfe"/><rect x="2393.0" y="145" width="1.0" height="1.5" fill="#d4d4d4"/><rect x="2394.0" y="145" width="10.0" height="1.5" fill="#ce9178"/><rect x="2405.0" y="145" width="11.0" height="1.5" fill="#9cdcfe"/><rect x="2416.0" y="145" width="1.0" height="1.5" fill="#d4d4d4"/><rect x="2417.0" y="145" width="3.0" height="1.5" fill="#ce9178"/><rect x="2328.0" y="147" width="2.0" height="1.5" fill="#808080"/><rect x="2330.0" y="147" width="3.0" height="1.5" fill="#569cd6"/><rect x="2333.0" y="147" width="1.0" height="1.5" fill="#808080"/><rect x="2328.0" y="149" width="1.0" height="1.5" fill="#808080"/><rect x="2329.0" y="149" width="3.0" height="1.5" fill="#569cd6"/><rect x="2333.0" y="149" width="5.0" height="1.5" fill="#9cdcfe"/><rect x="2338.0" y="149" width="1.0" height="1.5" fill="#d4d4d4"/><rect x="2339.0" y="149" width="6.0" height="1.5" fill="#ce9178"/><rect x="2345.0" y="149" width="1.0" height="1.5" fill="#808080"/><rect x="2332.0" y="151" width="1.0" height="1.5" fill="#808080"/><rect x="2333.0" y="151" width="5.0" height="1.5" fill="#569cd6"/><rect x="2339.0" y="151" width="3.0" height="1.5" fill="#9cdcfe"/><rect x="2342.0" y="151" width="1.0" height="1.5" fill="#d4d4d4"/><rect x="2343.0" y="151" width="10.0" height="1.5" fill="#ce9178"/><rect x="2354.0" y="151" width="5.0" height="1.5" fill="#9cdcfe"/><rect x="2359.0" y="151" width="1.0" height="1.5" fill="#d4d4d4"/><rect x="2360.0" y="151" width="12.0" height="1.5" fill="#ce9178"/><rect x="2372.0" y="151" width="1.0" height="1.5" fill="#808080"/><rect x="2373.0" y="151" width="4.0" height="1.5" fill="#d4d4d4"/><rect x="2377.0" y="151" width="2.0" height="1.5" fill="#808080"/><rect x="2379.0" y="151" width="5.0" height="1.5" fill="#569cd6"/><rect x="2384.0" y="151" width="1.0" height="1.5" fill="#808080"/><rect x="2332.0" y="153" width="1.0" height="1.5" fill="#808080"/><rect x="2333.0" y="153" width="5.0" height="1.5" fill="#569cd6"/><rect x="2339.0" y="153" width="7.0" height="1.5" fill="#9cdcfe"/><rect x="2346.0" y="153" width="1.0" height="1.5" fill="#d4d4d4"/><rect x="2347.0" y="153" width="10.0" height="1.5" fill="#ce9178"/><rect x="2358.0" y="153" width="4.0" height="1.5" fill="#9cdcfe"/><rect x="2362.0" y="153" width="1.0" height="1.5" fill="#d4d4d4"/><rect x="2363.0" y="153" width="10.0" height="1.5" fill="#ce9178"/><rect x="2374.0" y="153" width="5.0" height="1.5" fill="#9cdcfe"/><rect x="2379.0" y="153" width="1.0" height="1.5" fill="#d4d4d4"/><rect x="2380.0" y="153" width="14.0" height="1.5" fill="#ce9178"/><rect x="2395.0" y="153" width="2.0" height="1.5" fill="#9cdcfe"/><rect x="2397.0" y="153" width="1.0" height="1.5" fill="#d4d4d4"/><rect x="2398.0" y="153" width="10.0" height="1.5" fill="#ce9178"/><rect x="2409.0" y="153" width="11.0" height="1.5" fill="#9cdcfe"/><rect x="2328.0" y="155" width="2.0" height="1.5" fill="#808080"/><rect x="2330.0" y="155" width="3.0" height="1.5" fill="#569cd6"/><rect x="2333.0" y="155" width="1.0" height="1.5" fill="#808080"/><rect x="2328.0" y="157" width="1.0" height="1.5" fill="#808080"/><rect x="2329.0" y="157" width="3.0" height="1.5" fill="#569cd6"/><rect x="2333.0" y="157" width="5.0" height="1.5" fill="#9cdcfe"/><rect x="2338.0" y="157" width="1.0" height="1.5" fill="#d4d4d4"/><rect x="2339.0" y="157" width="15.0" height="1.5" fill="#ce9178"/><rect x="2354.0" y="157" width="1.0" height="1.5" fill="#808080"/><rect x="2355.0" y="157" width="2.0" height="1.5" fill="#d4d4d4"/><rect x="2358.0" y="157" width="13.0" height="1.5" fill="#9cdcfe"/><rect x="2372.0" y="157" width="2.0" height="1.5" fill="#d4d4d4"/><rect x="2374.0" y="157" width="2.0" height="1.5" fill="#808080"/><rect x="2376.0" y="157" width="3.0" height="1.5" fill="#569cd6"/><rect x="2379.0" y="157" width="1.0" height="1.5" fill="#808080"/><rect x="2328.0" y="159" width="1.0" height="1.5" fill="#808080"/><rect x="2329.0" y="159" width="6.0" height="1.5" fill="#569cd6"/><rect x="2336.0" y="159" width="4.0" height="1.5" fill="#9cdcfe"/><rect x="2340.0" y="159" width="1.0" height="1.5" fill="#d4d4d4"/><rect x="2341.0" y="159" width="8.0" height="1.5" fill="#ce9178"/><rect x="2350.0" y="159" width="5.0" height="1.5" fill="#9cdcfe"/><rect x="2355.0" y="159" width="1.0" height="1.5" fill="#d4d4d4"/><rect x="2356.0" y="159" width="4.0" height="1.5" fill="#ce9178"/><rect x="2361.0" y="159" width="12.0" height="1.5" fill="#ce9178"/><rect x="2373.0" y="159" width="1.0" height="1.5" fill="#808080"/><rect x="2374.0" y="159" width="4.0" height="1.5" fill="#d4d4d4"/><rect x="2378.0" y="159" width="2.0" height="1.5" fill="#808080"/><rect x="2380.0" y="159" width="6.0" height="1.5" fill="#569cd6"/><rect x="2386.0" y="159" width="1.0" height="1.5" fill="#808080"/><rect x="2324.0" y="161" width="2.0" height="1.5" fill="#808080"/><rect x="2326.0" y="161" width="4.0" height="1.5" fill="#569cd6"/><rect x="2330.0" y="161" width="1.0" height="1.5" fill="#808080"/><rect x="2320.0" y="163" width="2.0" height="1.5" fill="#808080"/><rect x="2322.0" y="163" width="3.0" height="1.5" fill="#569cd6"/><rect x="2325.0" y="163" width="1.0" height="1.5" fill="#808080"/><rect x="2316.0" y="165" width="2.0" height="1.5" fill="#808080"/><rect x="2318.0" y="165" width="3.0" height="1.5" fill="#569cd6"/><rect x="2321.0" y="165" width="1.0" height="1.5" fill="#808080"/><rect x="2312.0" y="167" width="2.0" height="1.5" fill="#808080"/><rect x="2314.0" y="167" width="12.0" height="1.5" fill="#569cd6"/><rect x="2326.0" y="167" width="1.0" height="1.5" fill="#808080"/><rect x="2308.0" y="169" width="2.0" height="1.5" fill="#808080"/><rect x="2310.0" y="169" width="8.0" height="1.5" fill="#c0c0c0"/><rect x="2318.0" y="169" width="1.0" height="1.5" fill="#808080"/><rect x="2308.0" y="173" width="1.0" height="1.5" fill="#808080"/><rect x="2309.0" y="173" width="6.0" height="1.5" fill="#c0c0c0"/><rect x="2315.0" y="173" width="1.0" height="1.5" fill="#808080"/><rect x="2308.0" y="175" width="6.0" height="1.5" fill="#c586c0"/><rect x="2315.0" y="175" width="12.0" height="1.5" fill="#9cdcfe"/><rect x="2328.0" y="175" width="4.0" height="1.5" fill="#c586c0"/><rect x="2333.0" y="175" width="38.0" height="1.5" fill="#ce9178"/><rect x="2308.0" y="177" width="6.0" height="1.5" fill="#c586c0"/><rect x="2315.0" y="177" width="1.0" height="1.5" fill="#d4d4d4"/><rect x="2317.0" y="177" width="8.0" height="1.5" fill="#9cdcfe"/><rect x="2326.0" y="177" width="1.0" height="1.5" fill="#d4d4d4"/><rect x="2328.0" y="177" width="4.0" height="1.5" fill="#c586c0"/><rect x="2333.0" y="177" width="6.0" height="1.5" fill="#ce9178"/><rect x="2308.0" y="179" width="6.0" height="1.5" fill="#c586c0"/><rect x="2315.0" y="179" width="1.0" height="1.5" fill="#d4d4d4"/><rect x="2317.0" y="179" width="3.0" height="1.5" fill="#9cdcfe"/><rect x="2321.0" y="179" width="1.0" height="1.5" fill="#d4d4d4"/><rect x="2323.0" y="179" width="4.0" height="1.5" fill="#c586c0"/><rect x="2328.0" y="179" width="5.0" height="1.5" fill="#ce9178"/><rect x="2308.0" y="181" width="6.0" height="1.5" fill="#c586c0"/><rect x="2315.0" y="181" width="6.0" height="1.5" fill="#9cdcfe"/><rect x="2322.0" y="181" width="4.0" height="1.5" fill="#c586c0"/><rect x="2327.0" y="181" width="23.0" height="1.5" fill="#ce9178"/><rect x="2308.0" y="185" width="6.0" height="1.5" fill="#c586c0"/><rect x="2315.0" y="185" width="7.0" height="1.5" fill="#c586c0"/><rect x="2323.0" y="185" width="1.0" height="1.5" fill="#d4d4d4"/><rect x="2312.0" y="187" width="10.0" height="1.5" fill="#9cdcfe"/><rect x="2322.0" y="187" width="1.0" height="1.5" fill="#d4d4d4"/><rect x="2324.0" y="187" width="1.0" height="1.5" fill="#d4d4d4"/><rect x="2316.0" y="189" width="12.0" height="1.5" fill="#9cdcfe"/><rect x="2312.0" y="191" width="2.0" height="1.5" fill="#d4d4d4"/><rect x="2312.0" y="193" width="5.0" height="1.5" fill="#dcdcaa"/><rect x="2317.0" y="193" width="2.0" height="1.5" fill="#d4d4d4"/><rect x="2320.0" y="193" width="1.0" height="1.5" fill="#d4d4d4"/><rect x="2316.0" y="195" width="5.0" height="1.5" fill="#569cd6"/><rect x="2322.0" y="195" width="5.0" height="1.5" fill="#4fc1ff"/><rect x="2328.0" y="195" width="1.0" height="1.5" fill="#d4d4d4"/><rect x="2330.0" y="195" width="8.0" height="1.5" fill="#dcdcaa"/><rect x="2338.0" y="195" width="3.0" height="1.5" fill="#d4d4d4"/><rect x="2316.0" y="197" width="3.0" height="1.5" fill="#569cd6"/><rect x="2320.0" y="197" width="8.0" height="1.5" fill="#9cdcfe"/><rect x="2329.0" y="197" width="1.0" height="1.5" fill="#d4d4d4"/><rect x="2331.0" y="197" width="3.0" height="1.5" fill="#dcdcaa"/><rect x="2334.0" y="197" width="5.0" height="1.5" fill="#d4d4d4"/><rect x="2316.0" y="199" width="3.0" height="1.5" fill="#569cd6"/><rect x="2320.0" y="199" width="8.0" height="1.5" fill="#9cdcfe"/><rect x="2329.0" y="199" width="1.0" height="1.5" fill="#d4d4d4"/><rect x="2331.0" y="199" width="3.0" height="1.5" fill="#dcdcaa"/><rect x="2334.0" y="199" width="5.0" height="1.5" fill="#d4d4d4"/><rect x="2316.0" y="201" width="3.0" height="1.5" fill="#569cd6"/><rect x="2320.0" y="201" width="13.0" height="1.5" fill="#9cdcfe"/><rect x="2334.0" y="201" width="1.0" height="1.5" fill="#d4d4d4"/><rect x="2336.0" y="201" width="3.0" height="1.5" fill="#dcdcaa"/><rect x="2339.0" y="201" width="5.0" height="1.5" fill="#d4d4d4"/><rect x="2316.0" y="205" width="5.0" height="1.5" fill="#569cd6"/><rect x="2322.0" y="205" width="5.0" height="1.5" fill="#dcdcaa"/><rect x="2328.0" y="205" width="1.0" height="1.5" fill="#d4d4d4"/><rect x="2330.0" y="205" width="2.0" height="1.5" fill="#d4d4d4"/><rect x="2333.0" y="205" width="2.0" height="1.5" fill="#569cd6"/><rect x="2336.0" y="205" width="1.0" height="1.5" fill="#d4d4d4"/><rect x="2320.0" y="207" width="13.0" height="1.5" fill="#9cdcfe"/><rect x="2333.0" y="207" width="1.0" height="1.5" fill="#d4d4d4"/><rect x="2334.0" y="207" width="5.0" height="1.5" fill="#9cdcfe"/><rect x="2340.0" y="207" width="1.0" height="1.5" fill="#d4d4d4"/><rect x="2342.0" y="207" width="2.0" height="1.5" fill="#ce9178"/><rect x="2344.0" y="207" width="1.0" height="1.5" fill="#d4d4d4"/><rect x="2320.0" y="209" width="5.0" height="1.5" fill="#4fc1ff"/><rect x="2325.0" y="209" width="1.0" height="1.5" fill="#d4d4d4"/><rect x="2326.0" y="209" width="8.0" height="1.5" fill="#dcdcaa"/><rect x="2334.0" y="209" width="1.0" height="1.5" fill="#d4d4d4"/><rect x="2335.0" y="209" width="7.0" height="1.5" fill="#ce9178"/><rect x="2342.0" y="209" width="1.0" height="1.5" fill="#d4d4d4"/><rect x="2344.0" y="209" width="1.0" height="1.5" fill="#d4d4d4"/><rect x="2324.0" y="211" width="8.0" height="1.5" fill="#9cdcfe"/><rect x="2332.0" y="211" width="1.0" height="1.5" fill="#d4d4d4"/><rect x="2334.0" y="211" width="14.0" height="1.5" fill="#9cdcfe"/><rect x="2348.0" y="211" width="1.0" height="1.5" fill="#d4d4d4"/><rect x="2324.0" y="213" width="8.0" height="1.5" fill="#9cdcfe"/><rect x="2332.0" y="213" width="1.0" height="1.5" fill="#d4d4d4"/><rect x="2334.0" y="213" width="14.0" height="1.5" fill="#9cdcfe"/><rect x="2348.0" y="213" width="1.0" height="1.5" fill="#d4d4d4"/><rect x="2324.0" y="215" width="7.0" height="1.5" fill="#dcdcaa"/><rect x="2331.0" y="215" width="2.0" height="1.5" fill="#d4d4d4"/><rect x="2334.0" y="215" width="1.0" height="1.5" fill="#d4d4d4"/><rect x="2328.0" y="217" width="24.0" height="1.5" fill="#6a9955"/><rect x="2328.0" y="219" width="5.0" height="1.5" fill="#4fc1ff"/><rect x="2333.0" y="219" width="1.0" height="1.5" fill="#d4d4d4"/><rect x="2334.0" y="219" width="8.0" height="1.5" fill="#dcdcaa"/><rect x="2342.0" y="219" width="1.0" height="1.5" fill="#d4d4d4"/><rect x="2343.0" y="219" width="9.0" height="1.5" fill="#ce9178"/><rect x="2352.0" y="219" width="1.0" height="1.5" fill="#d4d4d4"/><rect x="2354.0" y="219" width="1.0" height="1.5" fill="#d4d4d4"/><rect x="2332.0" y="221" width="7.0" height="1.5" fill="#dcdcaa"/><rect x="2339.0" y="221" width="2.0" height="1.5" fill="#d4d4d4"/><rect x="2342.0" y="221" width="1.0" height="1.5" fill="#d4d4d4"/><rect x="2336.0" y="223" width="6.0" height="1.5" fill="#4fc1ff"/><rect x="2342.0" y="223" width="1.0" height="1.5" fill="#d4d4d4"/><rect x="2343.0" y="223" width="4.0" height="1.5" fill="#dcdcaa"/><rect x="2347.0" y="223" width="2.0" height="1.5" fill="#d4d4d4"/><rect x="2350.0" y="223" width="4.0" height="1.5" fill="#9cdcfe"/><rect x="2354.0" y="223" width="1.0" height="1.5" fill="#d4d4d4"/><rect x="2356.0" y="223" width="6.0" height="1.5" fill="#ce9178"/><rect x="2363.0" y="223" width="3.0" height="1.5" fill="#d4d4d4"/><rect x="2336.0" y="225" width="7.0" height="1.5" fill="#9cdcfe"/><rect x="2343.0" y="225" width="1.0" height="1.5" fill="#d4d4d4"/><rect x="2344.0" y="225" width="3.0" height="1.5" fill="#dcdcaa"/><rect x="2347.0" y="225" width="1.0" height="1.5" fill="#d4d4d4"/><rect x="2348.0" y="225" width="16.0" height="1.5" fill="#4fc1ff"/><rect x="2364.0" y="225" width="2.0" height="1.5" fill="#d4d4d4"/><rect x="2332.0" y="227" width="1.0" height="1.5" fill="#d4d4d4"/><rect x="2328.0" y="229" width="2.0" height="1.5" fill="#d4d4d4"/><rect x="2324.0" y="231" width="2.0" height="1.5" fill="#d4d4d4"/><rect x="2324.0" y="233" width="5.0" height="1.5" fill="#dcdcaa"/><rect x="2329.0" y="233" width="2.0" height="1.5" fill="#d4d4d4"/><rect x="2332.0" y="233" width="1.0" height="1.5" fill="#d4d4d4"/><rect x="2328.0" y="235" width="13.0" height="1.5" fill="#9cdcfe"/><rect x="2341.0" y="235" width="1.0" height="1.5" fill="#d4d4d4"/><rect x="2342.0" y="235" width="5.0" height="1.5" fill="#9cdcfe"/><rect x="2348.0" y="235" width="1.0" height="1.5" fill="#d4d4d4"/><rect x="2350.0" y="235" width="18.0" height="1.5" fill="#ce9178"/><rect x="2368.0" y="235" width="1.0" height="1.5" fill="#d4d4d4"/><rect x="2324.0" y="237" width="1.0" height="1.5" fill="#d4d4d4"/><rect x="2320.0" y="239" width="2.0" height="1.5" fill="#d4d4d4"/><rect x="2316.0" y="241" width="1.0" height="1.5" fill="#d4d4d4"/><rect x="2316.0" y="245" width="6.0" height="1.5" fill="#c586c0"/><rect x="2323.0" y="245" width="1.0" height="1.5" fill="#d4d4d4"/><rect x="2320.0" y="247" width="8.0" height="1.5" fill="#9cdcfe"/><rect x="2328.0" y="247" width="1.0" height="1.5" fill="#d4d4d4"/><rect x="2320.0" y="249" width="8.0" height="1.5" fill="#9cdcfe"/><rect x="2328.0" y="249" width="1.0" height="1.5" fill="#d4d4d4"/><rect x="2320.0" y="251" width="13.0" height="1.5" fill="#9cdcfe"/><rect x="2333.0" y="251" width="1.0" height="1.5" fill="#d4d4d4"/><rect x="2320.0" y="253" width="5.0" height="1.5" fill="#dcdcaa"/><rect x="2325.0" y="253" width="1.0" height="1.5" fill="#d4d4d4"/><rect x="2316.0" y="255" width="1.0" height="1.5" fill="#d4d4d4"/><rect x="2312.0" y="257" width="1.0" height="1.5" fill="#d4d4d4"/><rect x="2308.0" y="259" width="1.0" height="1.5" fill="#d4d4d4"/><rect x="2308.0" y="261" width="2.0" height="1.5" fill="#808080"/><rect x="2310.0" y="261" width="6.0" height="1.5" fill="#c0c0c0"/><rect x="2316.0" y="261" width="1.0" height="1.5" fill="#808080"/><rect x="2308.0" y="265" width="1.0" height="1.5" fill="#808080"/><rect x="2309.0" y="265" width="5.0" height="1.5" fill="#c0c0c0"/><rect x="2315.0" y="265" width="6.0" height="1.5" fill="#9cdcfe"/><rect x="2321.0" y="265" width="1.0" height="1.5" fill="#808080"/><rect x="2308.0" y="267" width="6.0" height="1.5" fill="#dcdcaa"/><rect x="2315.0" y="267" width="1.0" height="1.5" fill="#d4d4d4"/><rect x="2312.0" y="269" width="5.0" height="1.5" fill="#9cdcfe"/><rect x="2317.0" y="269" width="1.0" height="1.5" fill="#d4d4d4"/><rect x="2319.0" y="269" width="4.0" height="1.5" fill="#ce9178"/><rect x="2323.0" y="269" width="1.0" height="1.5" fill="#d4d4d4"/><rect x="2308.0" y="271" width="1.0" height="1.5" fill="#d4d4d4"/><rect x="2308.0" y="273" width="17.0" height="1.5" fill="#dcdcaa"/><rect x="2326.0" y="273" width="1.0" height="1.5" fill="#d4d4d4"/><rect x="2312.0" y="275" width="5.0" height="1.5" fill="#9cdcfe"/><rect x="2317.0" y="275" width="1.0" height="1.5" fill="#d4d4d4"/><rect x="2319.0" y="275" width="3.0" height="1.5" fill="#ce9178"/><rect x="2322.0" y="275" width="1.0" height="1.5" fill="#d4d4d4"/><rect x="2308.0" y="277" width="1.0" height="1.5" fill="#d4d4d4"/><rect x="2308.0" y="279" width="2.0" height="1.5" fill="#808080"/><rect x="2310.0" y="279" width="5.0" height="1.5" fill="#c0c0c0"/><rect x="2315.0" y="279" width="1.0" height="1.5" fill="#808080"/></g>
<rect x="2302" y="213" width="3" height="3" fill="#f14c4c"/>
<line x1="2420.8" y1="131" x2="2420.8" y2="1174" stroke="#3a3a3a" stroke-width="1.5"/>
<rect x="2421.5" y="412.7" width="18.5" height="291.2" fill="#424242"/>
<rect x="2421.5" y="481" width="18.5" height="2" fill="#8a8a8a"/>
<rect x="2421.5" y="542" width="6" height="10" fill="#a85454"/>
<rect x="2435" y="131" width="5" height="10" fill="#3794ff"/>
</svg>
</div>
<div id="status" class="a">
<div class="a" style="left:0;top:0;width:51px;height:32px;background:#16825d"></div>
<svg class="a" style="left:0;top:0" width="2440" height="32" viewBox="0 1175 2440 32">
<g fill="none" stroke="#ffffff" stroke-width="1.6">
<path d="M18.8 1188.3L25.6 1193.8L19.3 1199.5M31.5 1182.6L25.8 1188.3L31.8 1193.9"/>
<circle cx="69.3" cy="1184.3" r="2.5"/><circle cx="78.6" cy="1188.7" r="2.5"/><circle cx="69.3" cy="1198.4" r="2.5"/>
<path d="M69.3 1186.8V1195.9M78.6 1191.2Q78.6 1194.5 74 1194.5Q69.8 1194.5 69.3 1196"/>
<path d="M179.1 1187.5A7.4 7.4 0 0 1 192.5 1192.3M191.7 1195.3A7.4 7.4 0 0 1 177.9 1192"/>
<path d="M189.3 1190L192.5 1193.2L195.7 1190M174.7 1193L177.8 1190L180.9 1193"/>
<circle cx="230" cy="1191.5" r="8.7"/><path d="M226.5 1188L233.5 1195M233.5 1188L226.5 1195"/>
<path d="M270.4 1182.8L279.3 1199H261.5Z"/><path d="M270.4 1188.5V1194"/>
<circle cx="311.3" cy="1191.5" r="8.7"/><path d="M311.3 1190V1196"/>
<path d="M2355 1183.5H2371.5V1194.5H2364L2359.5 1199V1194.5H2355Z" stroke-width="0"/>
</g>
<g fill="#ffffff"><circle cx="270.4" cy="1196.3" r="1.1"/><circle cx="311.3" cy="1187.3" r="1.1"/></g>
<g fill="none" stroke="#ffffff" stroke-width="1.6">
<path d="M2358.4 1186V1183.2H2371V1191H2368.2L2365.8 1193.6"/><circle cx="2359.5" cy="1190.8" r="3.5"/><path d="M2354.6 1200.4A4.9 4.9 0 0 1 2364.4 1200.4"/><path d="M2402.4 1196.5V1189A5 5.5 0 0 1 2412.6 1189V1196.5L2414.6 1197.4H2400.4Z"/><path d="M2405 1197.8A2.4 2.4 0 0 0 2409.8 1197.8"/>
</g>
</svg>
<div class="a st" style="left:89px;transform:scaleX(0.918);transform-origin:0 0">master*</div>
<div class="a st" style="left:245px">0</div>
<div class="a st" style="left:285.5px">0</div>
<div class="a st" style="left:326.5px">2</div>
<div class="a st" style="left:1469px;transform:scaleX(0.91);transform-origin:0 0">行 36，列 37</div>
<div class="a st" style="left:1597px;transform:scaleX(0.9);transform-origin:0 0">空格: 4</div>
<div class="a st" style="left:1675px;transform:scaleX(0.88);transform-origin:0 0">UTF-8</div>
<div class="a st" style="left:1746px;transform:scaleX(0.79);transform-origin:0 0">CRLF</div>
<div class="a st" style="left:1810px;transform:scaleX(0.915);transform-origin:0 0">Vue</div>
<div class="a st" style="left:1864px;transform:scaleX(0.84);transform-origin:0 0">Tag: UNSURE</div>
<div class="a st" style="left:1992px;transform:scaleX(0.834);transform-origin:0 0">TS 4.7.3</div>
<div class="a st" style="left:2076px;transform:scaleX(0.915);transform-origin:0 0">Attr: kebab-case</div>
<div class="a st" style="left:2229px;transform:scaleX(0.93);transform-origin:0 0">jsconfig.json</div>
</div>
<div class="box" style="left:591px;top:230px;width:1076px;height:917px"></div>
<div class="box" style="left:833px;top:673px;width:517px;height:77px"></div>
<div class="box" style="left:96px;top:914px;width:351px;height:134.5px"></div>
<div class="a" style="left:456px;top:131px;width:1844px;height:6px;background:linear-gradient(rgba(0,0,0,0.5),rgba(0,0,0,0))"></div>
</body>
</html>
